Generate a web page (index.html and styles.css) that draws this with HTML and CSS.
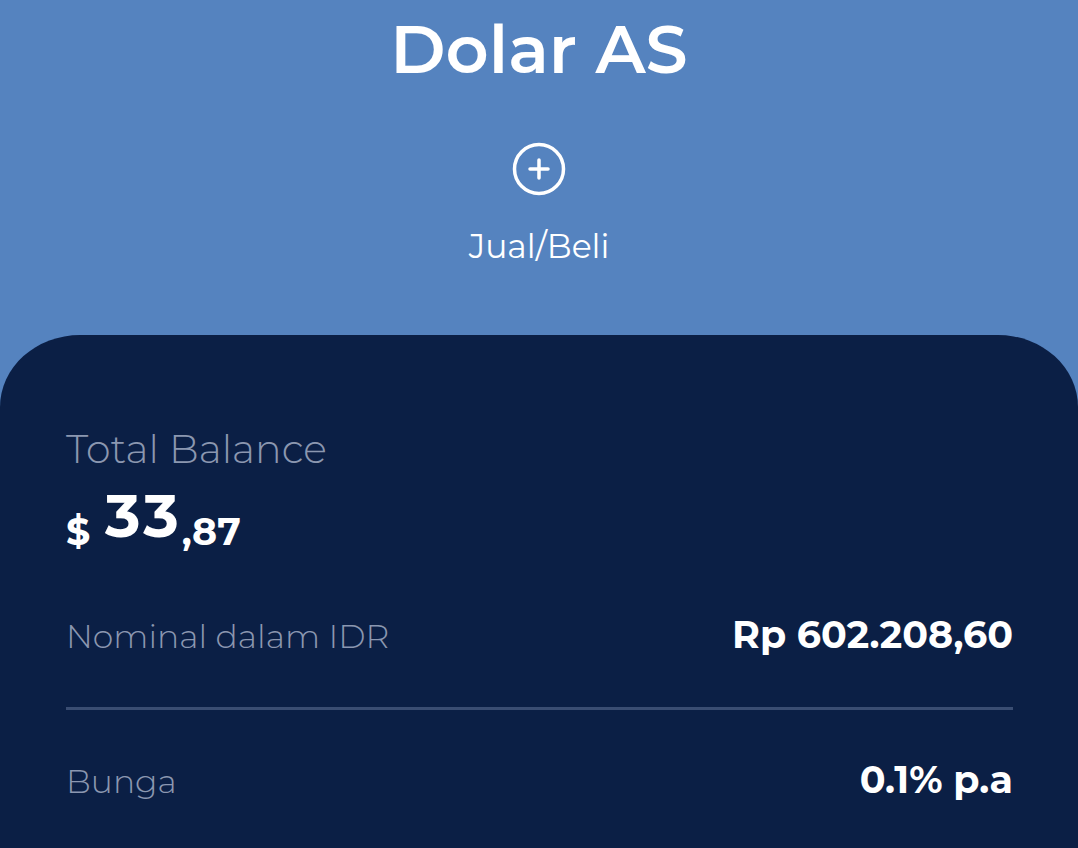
FILE: index.html
```html
<!DOCTYPE html>
<html lang="id">
<head>
<meta charset="utf-8">
<title>Dolar AS</title>
<link rel="stylesheet" href="styles.css">
</head>
<body>
  <header class="hero">
    <h1 class="hero-title">Dolar AS</h1>
    <button class="trade-btn" type="button">
      <svg class="trade-icon" viewBox="0 0 56 56" width="56" height="56" aria-hidden="true">
        <circle cx="28" cy="28" r="24.5" fill="none" stroke="#fff" stroke-width="3.5"/>
        <path d="M28 19v18M19 28h18" stroke="#fff" stroke-width="3.5" stroke-linecap="round"/>
      </svg>
      <span class="trade-label">Jual/Beli</span>
    </button>
  </header>

  <section class="card">
    <p class="balance-label">Total Balance</p>
    <p class="balance-value"><span class="cur">$</span> <span class="int">33</span><span class="dec">,87</span></p>

    <div class="row">
      <span class="row-key">Nominal dalam IDR</span>
      <span class="row-val">Rp 602.208,60</span>
    </div>
    <hr class="divider">
    <div class="row row-last">
      <span class="row-key">Bunga</span>
      <span class="row-val">0.1% p.a</span>
    </div>
  </section>
</body>
</html>
```

FILE: styles.css
```css
* {
  box-sizing: border-box;
}

html, body {
  margin: 0;
  padding: 0;
}

body {
  width: 1078px;
  height: 848px;
  overflow: hidden;
  background: #5583bf;
  font-family: "Montserrat", "Inter", "DejaVu Sans", sans-serif;
  color: #fff;
}

/* Blue header with currency name and trade action */
.hero {
  height: 335px;
  display: flex;
  flex-direction: column;
  align-items: center;
  padding-top: 9px;
}

.hero-title {
  margin: 0;
  font-size: 67px;
  line-height: 80px;
  font-weight: 600;
}

.trade-btn {
  margin-top: 52px;
  display: flex;
  flex-direction: column;
  align-items: center;
  gap: 29px;
  background: none;
  border: 0;
  padding: 0;
  color: #fff;
  font-family: inherit;
  cursor: pointer;
}

.trade-icon {
  display: block;
}

.trade-label {
  font-size: 33px;
  line-height: 40px;
  font-weight: 400;
}

/* Dark balance card */
.card {
  height: 513px;
  background: #0b1f45;
  border-radius: 80px 80px 0 0 / 72px 72px 0 0;
  padding: 90px 65px 0 66px;
}

.balance-label {
  margin: 0;
  font-size: 39.5px;
  line-height: 48px;
  font-weight: 300;
  color: #8b97b0;
}

.balance-value {
  margin: 29px 0 0;
  height: 60px;
  font-size: 38px;
  line-height: 60px;
  font-weight: 700;
  white-space: nowrap;
}

.cur {
  margin-right: 4px;
}

.int {
  font-size: 60px;
  line-height: 0;
  letter-spacing: 3px;
  vertical-align: 8px;
}

.row {
  display: flex;
  justify-content: space-between;
  align-items: baseline;
  margin-top: 49px;
  line-height: 48px;
}

.row-key {
  font-size: 33px;
  font-weight: 300;
  color: #8b97b0;
}

.row-val {
  font-size: 38px;
  font-weight: 700;
  color: #fff;
}

.divider {
  margin: 47px 0 0;
  border: 0;
  height: 3px;
  background: #3a4d72;
}

.row-last {
  margin-top: 46px;
}
```
